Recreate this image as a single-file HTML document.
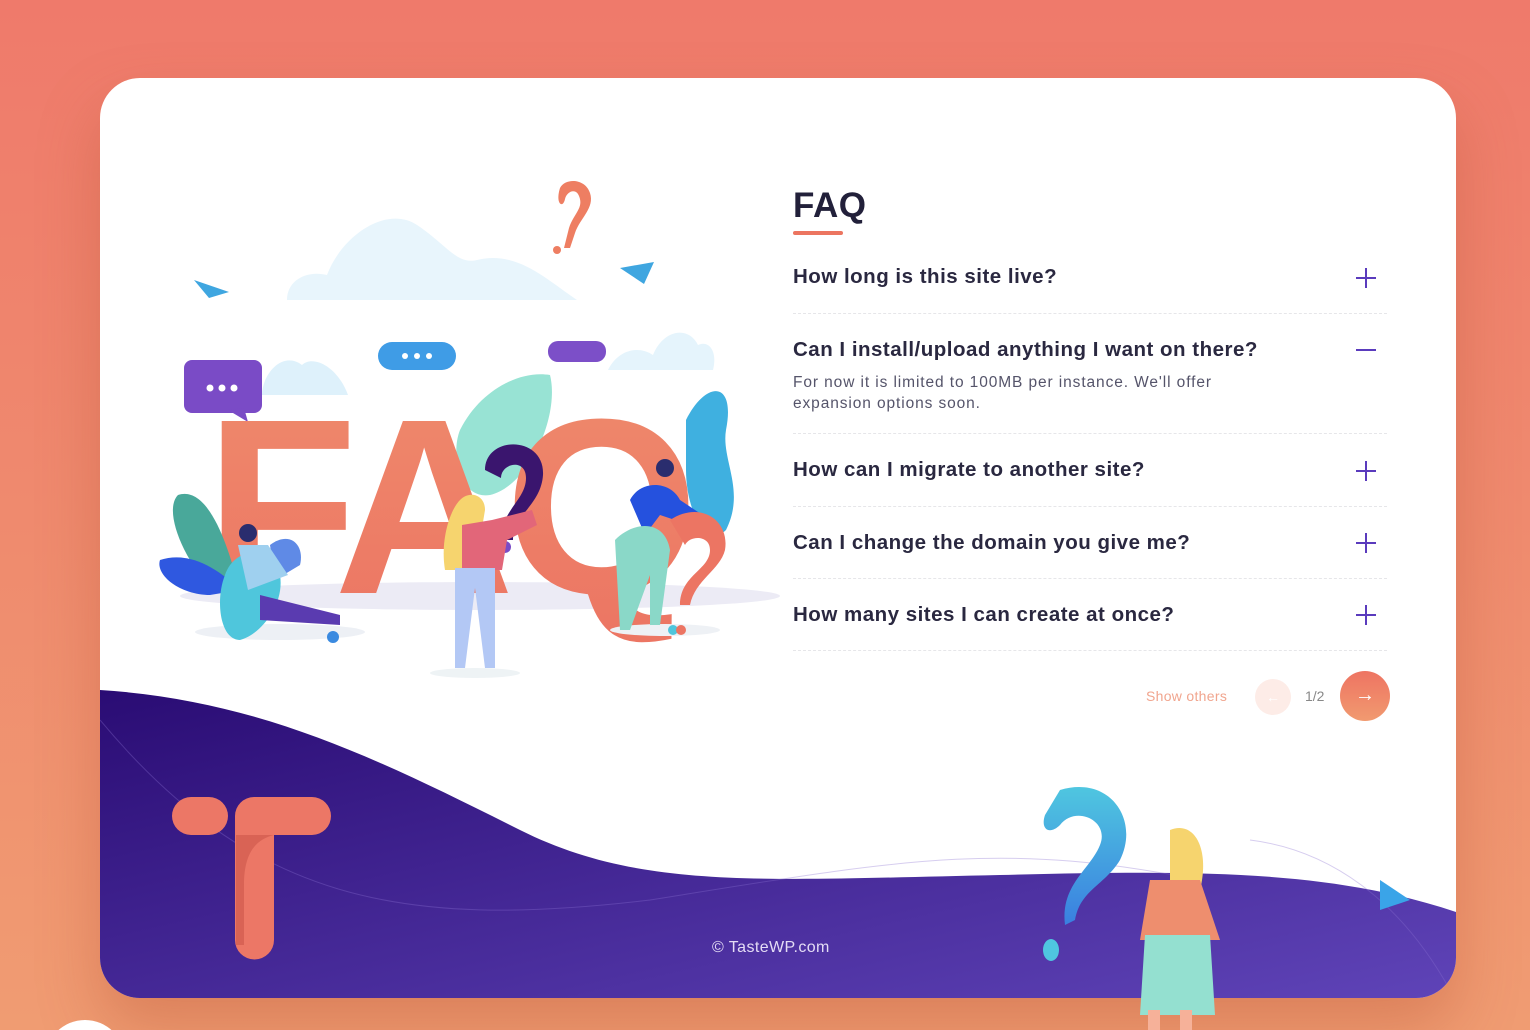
<!DOCTYPE html>
<html><head><meta charset="utf-8"><style>
*{margin:0;padding:0;box-sizing:border-box}
html,body{width:1530px;height:1030px;overflow:hidden}
body{background:linear-gradient(180deg,#ef7a6b 0%,#ef8a6e 50%,#f09c72 100%);font-family:"Liberation Sans",sans-serif;position:relative}
.card{position:absolute;left:100px;top:78px;width:1356px;height:920px;background:#fff;border-radius:40px;overflow:hidden;box-shadow:0 30px 60px rgba(180,80,50,.35)}
svg.bg{position:absolute;left:0;top:0}
h1{position:absolute;left:793px;top:186px;font-size:35px;color:#22203a;font-weight:bold;letter-spacing:0.5px}
.ul{position:absolute;left:793px;top:231px;width:50px;height:4px;border-radius:2px;background:#ec7560}
.q{position:absolute;left:793px;font-size:20.5px;font-weight:bold;color:#2a2840;letter-spacing:0.5px;white-space:nowrap}
.pl{position:absolute;left:1356px;width:20px;height:20px}
.pl:before{content:"";position:absolute;left:0;top:9px;width:20px;height:2.4px;background:#5a3bbd}
.pl.p:after{content:"";position:absolute;left:9px;top:0;width:2.4px;height:20px;background:#5a3bbd}
.hr{position:absolute;left:793px;width:594px;border-top:1px dashed #e6e6e9}
.ans{position:absolute;left:793px;top:372px;font-size:15.5px;line-height:21px;color:#55546a;letter-spacing:0.9px;white-space:nowrap}
</style></head><body>
<div class="card"></div>
<svg class="bg" width="1530" height="1030" viewBox="0 0 1530 1030">
<defs>
<linearGradient id="pg" x1="0" y1="0" x2="1" y2="1"><stop offset="0" stop-color="#2a0c74"/><stop offset="1" stop-color="#5f44b8"/></linearGradient>
<linearGradient id="og" x1="0" y1="0" x2="0" y2="1"><stop offset="0" stop-color="#ef8a6c"/><stop offset="1" stop-color="#ec7563"/></linearGradient>
<linearGradient id="bq" x1="0" y1="0" x2="0" y2="1"><stop offset="0" stop-color="#4fc6e0"/><stop offset="1" stop-color="#3a7fe0"/></linearGradient>
<clipPath id="cc"><rect x="100" y="78" width="1356" height="920" rx="40"/></clipPath>
</defs>
<g clip-path="url(#cc)">
<path d="M100 690 C260 700 380 760 520 830 C640 890 760 880 1000 875 C1200 870 1330 870 1456 912 L1456 1000 L100 1000 Z" fill="url(#pg)"/>
<path d="M100 720 C250 900 400 930 650 900 C900 860 1000 840 1200 880" stroke="#8a70d0" stroke-opacity=".35" fill="none"/>
<path d="M1250 840 C1330 850 1400 900 1450 990" stroke="#8a70d0" stroke-opacity=".35" fill="none"/>
</g>
<rect x="172" y="797" width="56" height="38" rx="19" fill="#ec7766"/>
<path d="M235 816 a19 19 0 0 1 19 -19 h58 a19 19 0 0 1 0 38 h-38 v105 a19 19 0 0 1 -39 0 z" fill="#ec7766"/>
<path d="M236 835 h38 c-20 5 -30 20 -30 50 v60 h-8 z" fill="#c54f43" opacity=".5"/>
<path d="M1090 790 c50 -15 80 30 60 70 c-15 25 -40 30 -45 60 l-10 5 c-5 -40 25 -55 35 -80 c10 -25 -25 -40 -40 -20 c-10 10 -20 5 -15 -10 z" fill="url(#bq)" transform="translate(-30 0)"/>
<ellipse cx="1051" cy="950" rx="8" ry="11" fill="#4fc6e0"/>
<path d="M1170 830 c25 -10 40 20 30 60 l-30 0 z" fill="#f6d46e"/>
<path d="M1150 880 h50 l20 60 l-80 0 z" fill="#ee8e6e"/>
<path d="M1145 935 h65 l5 80 h-75 z" fill="#94e0d0"/>
<rect x="1148" y="1010" width="12" height="20" fill="#f6b199"/><rect x="1180" y="1010" width="12" height="20" fill="#f6b199"/>
<path d="M1380 880 l30 20 l-30 10 z" fill="#3aa4e8"/>
<circle cx="85" cy="1060" r="40" fill="#fff"/>
<path d="M287 300 c0 -20 20 -30 40 -25 c15 -40 60 -70 90 -50 c30 20 40 40 60 35 c40 -10 70 20 100 40 z" fill="#e8f5fc"/>
<path d="M262 395 c0 -20 20 -45 40 -30 c10 -10 35 0 46 30 z" fill="#def1fb"/>
<path d="M608 370 c10 -20 30 -25 45 -15 c10 -25 35 -30 45 -10 c10 -5 20 5 15 25 z" fill="#e5f4fc"/>
<path d="M560 188 c5 -10 25 -10 30 5 c5 15 -10 25 -15 40 l-5 15 l-6 0 l5 -20 c5 -15 15 -20 10 -32 c-3 -8 -12 -5 -14 3 c-2 10 -10 5 -5 -11z" fill="#ee7e62"/>
<circle cx="557" cy="250" r="4" fill="#ee7e62"/>
<path d="M194 280 l35 12 l-20 6 z M620 268 l34 -6 l-10 22 z" fill="#3fa6e0"/>
<rect x="378" y="342" width="78" height="28" rx="14" fill="#3f9ce6"/>
<circle cx="405" cy="356" r="3" fill="#fff"/><circle cx="417" cy="356" r="3" fill="#fff"/><circle cx="429" cy="356" r="3" fill="#fff"/>
<rect x="548" y="341" width="58" height="21" rx="10" fill="#7c4fc8"/>
<rect x="184" y="360" width="78" height="53" rx="8" fill="#7a4bc6"/>
<path d="M228 410 l20 12 l-4 -14 z" fill="#7a4bc6"/>
<circle cx="210" cy="388" r="3.5" fill="#fff"/><circle cx="222" cy="388" r="3.5" fill="#fff"/><circle cx="234" cy="388" r="3.5" fill="#fff"/>
<ellipse cx="480" cy="596" rx="300" ry="14" fill="#ecebf5"/>
<path d="M460 430 c20 -40 60 -60 90 -55 c10 40 -20 110 -60 120 c-30 5 -40 -40 -30 -65z" fill="#98e3d4"/>
<path d="M686 420 c20 -40 50 -40 40 10 c-5 30 20 60 0 100 c-20 20 -40 -20 -40 -60 z" fill="#3fb0e0"/>
<text x="205" y="593" font-family="Liberation Sans" font-weight="bold" font-size="250" fill="url(#og)" letter-spacing="-10">FAQ</text>
<path d="M178 495 c30 -10 50 50 60 90 l-25 5 c-30 -30 -50 -80 -35 -95z" fill="#49a89a"/>
<path d="M160 560 c30 -10 60 10 80 30 l-30 5 c-30 0 -55 -20 -50 -35z" fill="#2f58e0"/>
<path d="M270 545 c20 -15 35 0 30 20 l-25 15z" fill="#5f8ae6"/>
<ellipse cx="280" cy="632" rx="85" ry="8" fill="#edf0f5"/>
<path d="M225 575 c10 -30 50 -30 55 0 c5 30 -20 60 -40 65 c-20 0 -25 -40 -15 -65z" fill="#4fc6dc"/>
<path d="M238 545 h30 l20 30 l-40 15z" fill="#9fd0ef"/>
<path d="M260 595 l80 20 l0 10 l-80 -5 z" fill="#5a3bb0"/>
<circle cx="248" cy="533" r="9" fill="#2a2d6e"/>
<circle cx="333" cy="637" r="6" fill="#3a8ae0"/>
<path d="M485 470 c0 -35 60 -35 58 5 c-2 30 -30 40 -30 65 l-12 0 c0 -30 25 -40 25 -62 c0 -20 -25 -15 -25 0z" fill="#3a156e"/>
<circle cx="505" cy="547" r="6" fill="#7a4bc6"/>
<path d="M460 500 c10 -10 25 -5 25 10 l-10 60 l-30 0 c-5 -30 5 -60 15 -70z" fill="#f6d46e"/>
<path d="M462 525 l30 -5 l40 -10 l5 15 l-30 15 l-5 30 l-40 0z" fill="#e26679"/>
<path d="M455 568 h40 l0 100 l-10 0 l-10 -80 l-10 80 l-10 0 z" fill="#b3c8f5"/>
<ellipse cx="475" cy="673" rx="45" ry="5" fill="#eef3f5"/>
<ellipse cx="665" cy="630" rx="55" ry="6" fill="#eef1f5"/>
<path d="M630 500 c10 -20 40 -20 50 0 l30 20 l-20 5 l-30 -10 l-15 20z" fill="#2551de"/>
<path d="M615 540 c20 -20 50 -20 55 10 l-10 75 l-10 0 l0 -50 l-20 55 l-10 0 z" fill="#8ad8c8"/>
<circle cx="665" cy="468" r="9" fill="#2a2d6e"/>
<path d="M670 520 c30 -20 60 0 55 30 c-5 20 -30 30 -35 55 l-10 0 c0 -30 30 -35 30 -55 c0 -15 -20 -15 -25 -5z" fill="#ec7563"/>
<circle cx="673" cy="630" r="5" fill="#4fc6dc"/><circle cx="681" cy="630" r="5" fill="#ec7563"/>
</svg>
<h1>FAQ</h1><div class="ul"></div>
<div class="q" style="top:265px">How long is this site live?</div><div class="pl p" style="top:268px"></div>
<div class="hr" style="top:313px"></div>
<div class="q" style="top:338px">Can I install/upload anything I want on there?</div><div class="pl" style="top:340px"></div>
<div class="ans">For now it is limited to 100MB per instance. We'll offer<br>expansion options soon.</div>
<div class="hr" style="top:433px"></div>
<div class="q" style="top:458px">How can I migrate to another site?</div><div class="pl p" style="top:461px"></div>
<div class="hr" style="top:506px"></div>
<div class="q" style="top:531px">Can I change the domain you give me?</div><div class="pl p" style="top:533px"></div>
<div class="hr" style="top:578px"></div>
<div class="q" style="top:603px">How many sites I can create at once?</div><div class="pl p" style="top:605px"></div>
<div class="hr" style="top:650px"></div>
<div style="position:absolute;left:1146px;top:688px;font-size:14px;color:#f1a58e;letter-spacing:0.3px">Show others</div>
<div style="position:absolute;left:1255px;top:679px;width:36px;height:36px;border-radius:50%;background:#fdece7;color:#fff;text-align:center;line-height:36px;font-size:14px">←</div>
<div style="position:absolute;left:1305px;top:688px;font-size:14px;color:#888">1/2</div>
<div style="position:absolute;left:1340px;top:671px;width:50px;height:50px;border-radius:50%;background:linear-gradient(180deg,#ee7462,#f19a70);color:#fff;text-align:center;line-height:48px;font-size:20px">→</div>
<div style="position:absolute;left:712px;top:939px;font-size:16px;color:#e4dcf5;letter-spacing:0.4px">© TasteWP.com</div>
</body></html>
